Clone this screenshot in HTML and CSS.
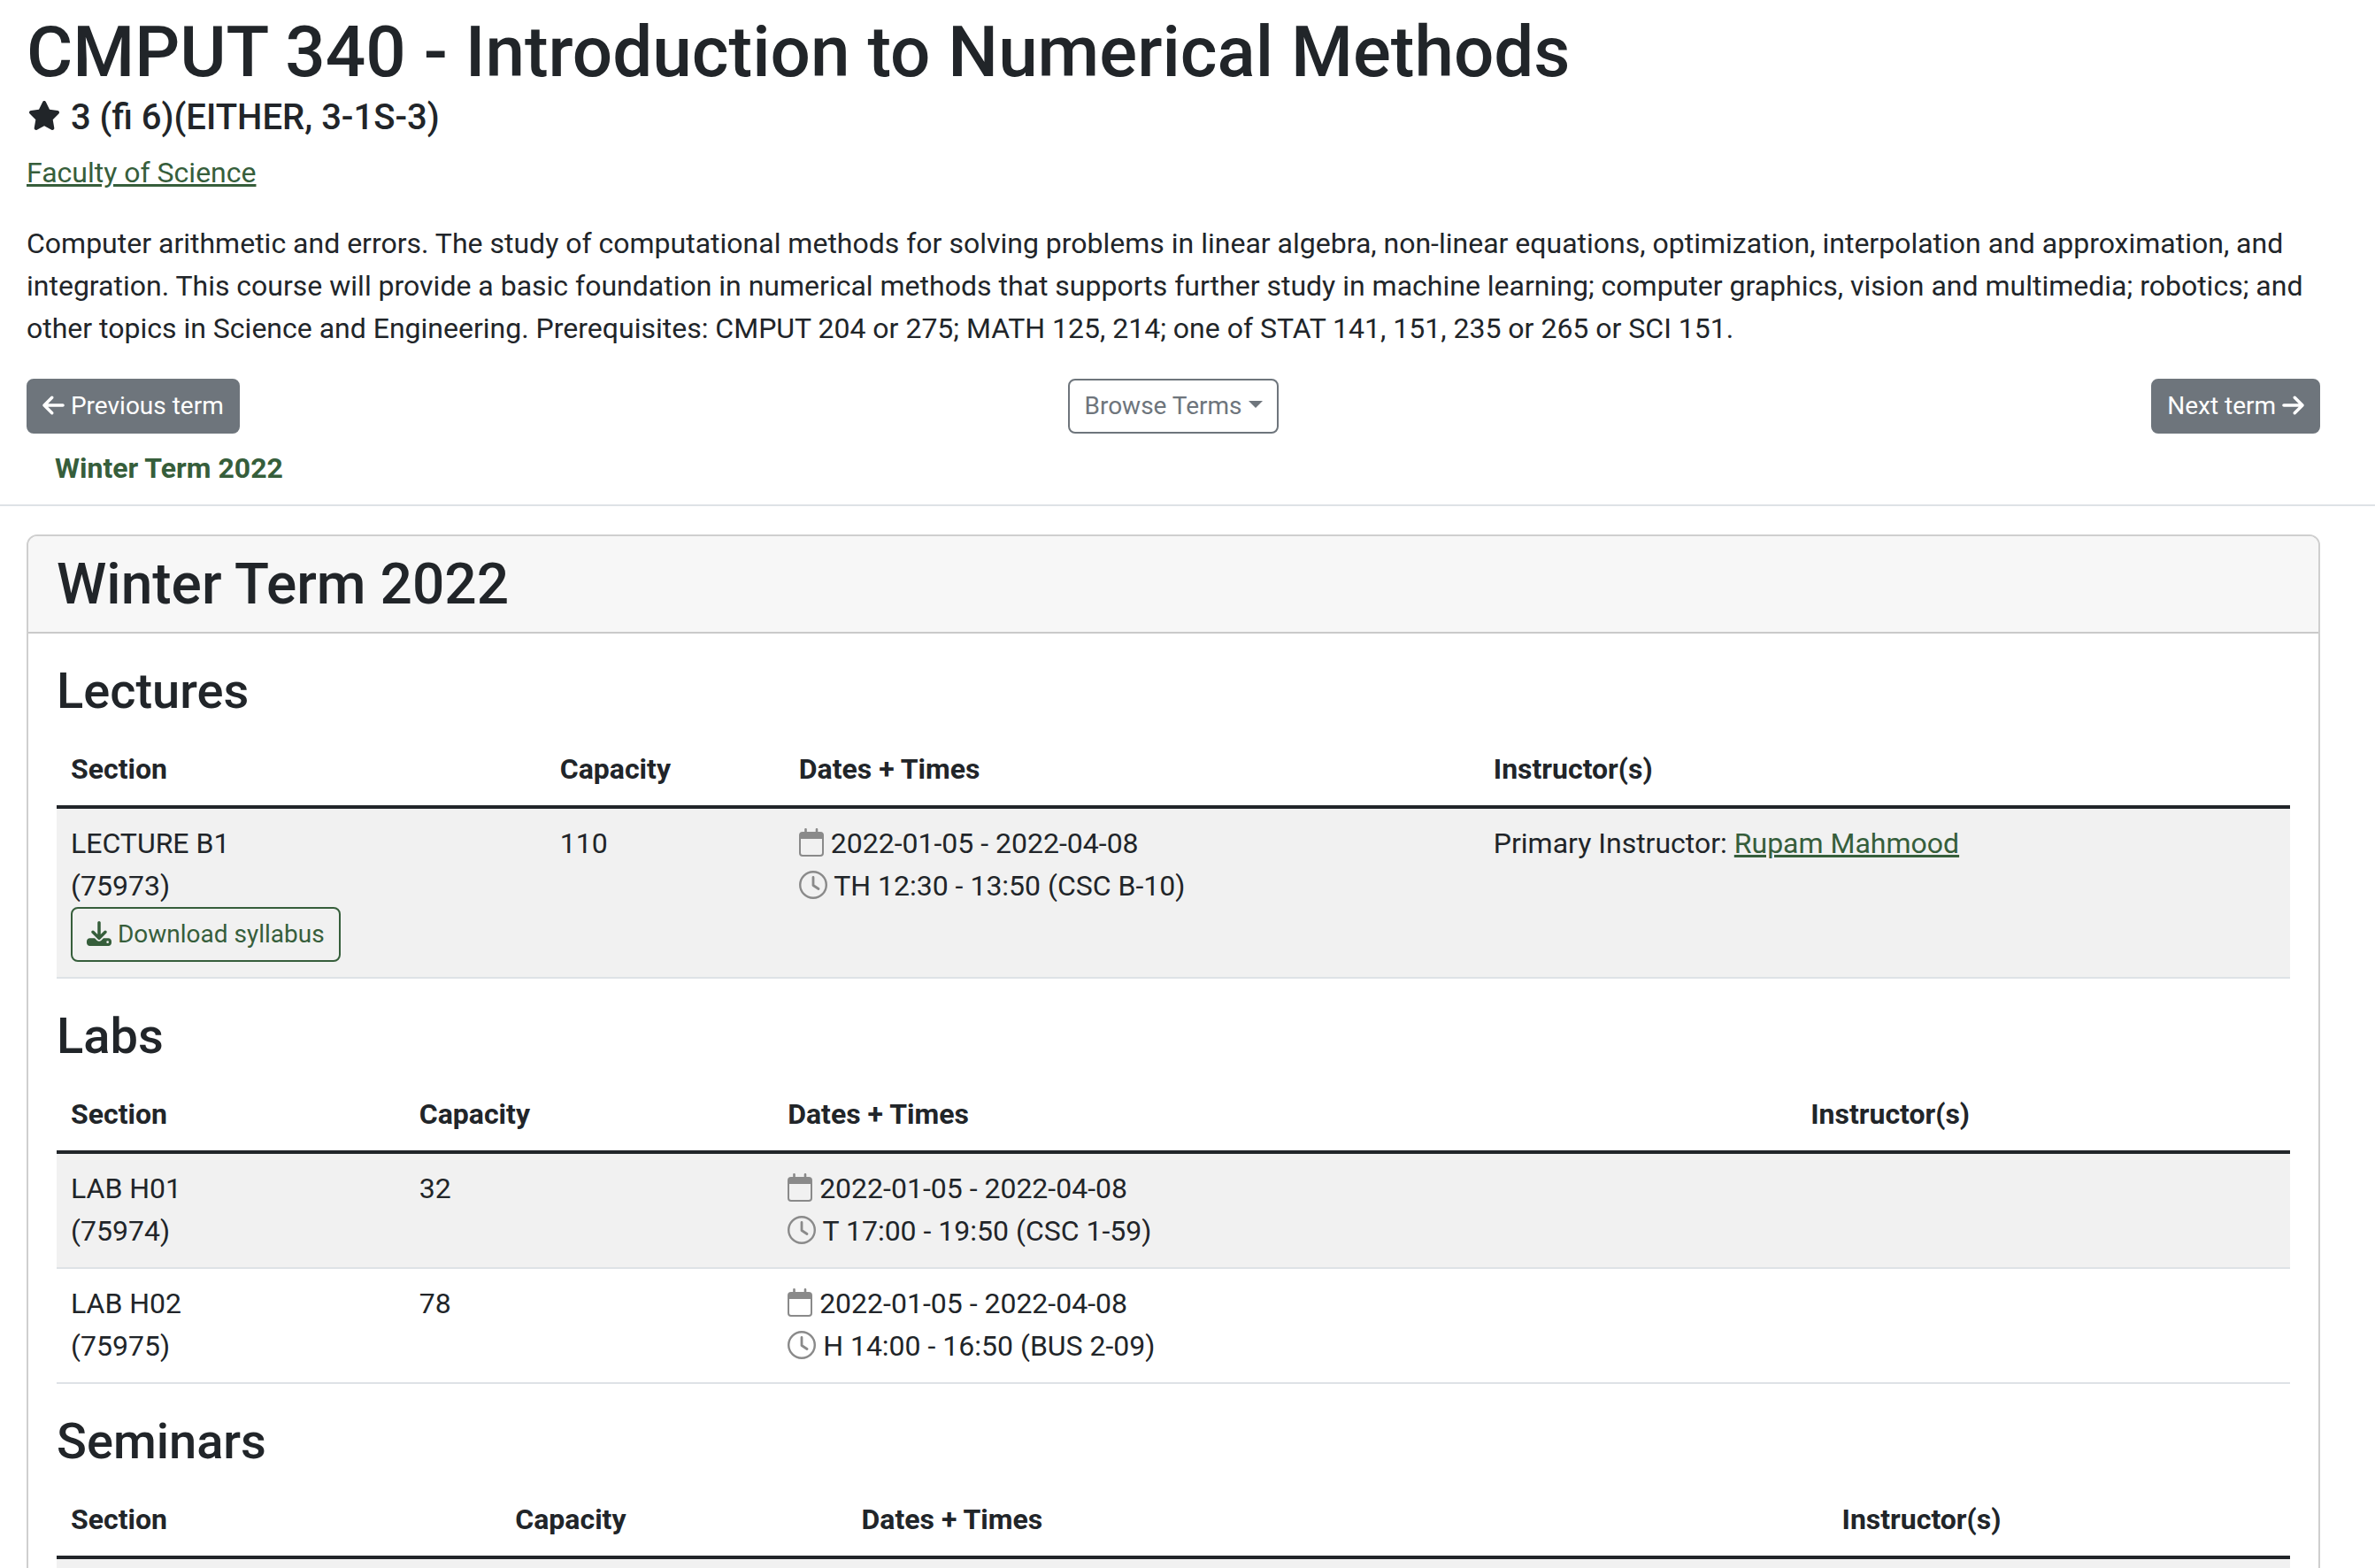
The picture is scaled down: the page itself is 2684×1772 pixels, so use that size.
FILE: index.html
```html
<!DOCTYPE html>
<html lang="en">
<head>
<meta charset="utf-8">
<meta name="viewport" content="width=device-width, initial-scale=1">
<title>CMPUT 340 - Introduction to Numerical Methods</title>
<link rel="stylesheet" href="styles.css">
</head>
<body>
<svg class="sprite" aria-hidden="true">
  <symbol id="calendar" viewBox="0 0 28 32">
    <path d="M7.5 1.2v4M20 1.2v4" fill="none" stroke="currentColor" stroke-width="2.6" stroke-linecap="round"/>
    <path fill="currentColor" fill-rule="evenodd" d="M4 4h20a4 4 0 0 1 4 4v20a4 4 0 0 1-4 4H4a4 4 0 0 1-4-4V8a4 4 0 0 1 4-4zM2 12v16a2 2 0 0 0 2 2h20a2 2 0 0 0 2-2V12z"/>
  </symbol>
  <symbol id="clock" viewBox="0 0 32 32">
    <circle cx="16" cy="16" r="14.8" fill="none" stroke="currentColor" stroke-width="2.4"/>
    <path d="M16 7.5v9l6 4" fill="none" stroke="currentColor" stroke-width="2.8" stroke-linecap="round" stroke-linejoin="round"/>
  </symbol>
</svg>

<header class="course">
  <h1 class="course-title">CMPUT 340 - Introduction to Numerical Methods</h1>
  <p class="units"><svg class="star" viewBox="-22 0 620 512" aria-hidden="true"><path fill="currentColor" d="M316.900 18C311.600 7 300.400 0 288.100 0s-23.400 7-28.800 18L195 150.300 51.400 171.500c-12 1.800-22 10.200-25.700 21.700s-.7 24.200 7.900 32.700L137.800 329 113.200 474.700c-2 12 3 24.200 12.900 31.300s23 8 33.800 2.300l128.300-68.500 128.300 68.500c10.800 5.700 23.900 4.900 33.800-2.300s14.900-19.300 12.900-31.300L438.500 329 542.700 225.900c8.600-8.500 11.700-21.200 7.900-32.700s-13.700-19.900-25.700-21.700L381.200 150.300 316.900 18z"/></svg> 3 (fi 6)(EITHER, 3-1S-3)</p>
  <p class="faculty"><a href="#">Faculty of Science</a></p>
  <p class="description">Computer arithmetic and errors. The study of computational methods for solving problems in linear algebra, non-linear equations, optimization, interpolation and approximation, and integration. This course will provide a basic foundation in numerical methods that supports further study in machine learning; computer graphics, vision and multimedia; robotics; and other topics in Science and Engineering. Prerequisites: CMPUT 204 or 275; MATH 125, 214; one of STAT 141, 151, 235 or 265 or SCI 151.</p>
  <div class="term-nav">
    <a class="btn btn-solid" href="#"><svg class="arrow" viewBox="0 0 448 512" aria-hidden="true"><path fill="currentColor" d="M9.400 233.400c-12.500 12.500-12.500 32.800 0 45.300l160 160c12.500 12.500 32.800 12.500 45.300 0s12.500-32.800 0-45.300L109.200 288 416 288c17.700 0 32-14.300 32-32s-14.300-32-32-32l-306.700 0L214.600 118.600c12.500-12.500 12.500-32.800 0-45.300s-32.800-12.500-45.300 0l-160 160z"/></svg> Previous term</a>
    <button class="btn btn-outline" type="button">Browse Terms<span class="caret"></span></button>
    <a class="btn btn-solid" href="#">Next term <svg class="arrow" viewBox="0 0 448 512" aria-hidden="true"><path fill="currentColor" transform="matrix(-1 0 0 1 448 0)" d="M9.400 233.400c-12.500 12.500-12.500 32.800 0 45.300l160 160c12.500 12.500 32.800 12.500 45.300 0s12.500-32.800 0-45.300L109.200 288 416 288c17.700 0 32-14.300 32-32s-14.300-32-32-32l-306.700 0L214.600 118.600c12.500-12.500 12.500-32.800 0-45.300s-32.800-12.500-45.300 0l-160 160z"/></svg></a>
  </div>
</header>

<nav class="terms"><a href="#winter-2022">Winter Term 2022</a></nav>

<main class="content">
  <section class="card" id="winter-2022">
    <h2 class="card-header">Winter Term 2022</h2>
    <div class="card-body">
      <section>
        <h3 class="kind">Lectures</h3>
        <table class="sections lectures">
          <thead><tr><th>Section</th><th>Capacity</th><th>Dates + Times</th><th>Instructor(s)</th></tr></thead>
          <tbody>
            <tr>
              <td>LECTURE B1<br>(75973)<br><a class="btn btn-green" href="#"><svg class="download" viewBox="0 0 512 512" aria-hidden="true"><path fill="currentColor" d="M288 32c0-17.700-14.300-32-32-32s-32 14.300-32 32V274.700l-73.400-73.400c-12.500-12.500-32.800-12.500-45.300 0s-12.500 32.800 0 45.300l128 128c12.500 12.500 32.800 12.500 45.300 0l128-128c12.500-12.500 12.500-32.800 0-45.300s-32.800-12.500-45.300 0L288 274.700V32zM64 352c-35.300 0-64 28.700-64 64v32c0 35.300 28.700 64 64 64H448c35.300 0 64-28.700 64-64V416c0-35.300-28.700-64-64-64H346.500l-45.300 45.300c-25 25-65.500 25-90.500 0L165.500 352H64zm368 56a24 24 0 1 1 0 48 24 24 0 1 1 0-48z"/></svg> Download syllabus</a></td>
              <td>110</td>
              <td><svg class="cal"><use href="#calendar"/></svg> 2022-01-05 - 2022-04-08<br><svg class="clock"><use href="#clock"/></svg> TH 12:30 - 13:50 (CSC B-10)</td>
              <td>Primary Instructor: <a href="#">Rupam Mahmood</a></td>
            </tr>
          </tbody>
        </table>
      </section>
      <section>
        <h3 class="kind">Labs</h3>
        <table class="sections labs">
          <thead><tr><th>Section</th><th>Capacity</th><th>Dates + Times</th><th>Instructor(s)</th></tr></thead>
          <tbody>
            <tr>
              <td>LAB H01<br>(75974)</td>
              <td>32</td>
              <td><svg class="cal"><use href="#calendar"/></svg> 2022-01-05 - 2022-04-08<br><svg class="clock"><use href="#clock"/></svg> T 17:00 - 19:50 (CSC 1-59)</td>
              <td></td>
            </tr>
            <tr>
              <td>LAB H02<br>(75975)</td>
              <td>78</td>
              <td><svg class="cal"><use href="#calendar"/></svg> 2022-01-05 - 2022-04-08<br><svg class="clock"><use href="#clock"/></svg> H 14:00 - 16:50 (BUS 2-09)</td>
              <td></td>
            </tr>
          </tbody>
        </table>
      </section>
      <section>
        <h3 class="kind">Seminars</h3>
        <table class="sections seminars">
          <thead><tr><th>Section</th><th>Capacity</th><th>Dates + Times</th><th>Instructor(s)</th></tr></thead>
          <tbody>
            <tr><td></td><td></td><td></td><td></td></tr>
          </tbody>
        </table>
      </section>
    </div>
  </section>
</main>
</body>
</html>
```
FILE: styles.css
```css
* {
  box-sizing: border-box;
}

html {
  scrollbar-width: none;
}

body {
  margin: 0;
  padding-top: 11px;
  background: #fff;
  color: #212529;
  font: 400 32px/48px Roboto, "Liberation Sans", sans-serif;
}

h1, h2, h3, p {
  margin: 0;
  font-weight: 500;
}

a {
  color: #365e3b;
}

.sprite {
  display: none;
}

.course {
  padding: 0 62px 0 30px;
}

.course-title {
  font-size: 80px;
  line-height: 96px;
}

.units {
  font-size: 40px;
  line-height: 52px;
}

.star {
  width: 40px;
  height: 33px;
  vertical-align: -1px;
}

.faculty {
  margin-top: 12px;
  font-weight: 400;
}

.description {
  margin: 32px 0 33px;
  font-weight: 400;
}

.term-nav {
  display: grid;
  grid-template-columns: 1fr auto 1fr;
}

.term-nav .btn:first-child {
  justify-self: start;
}

.term-nav .btn:last-child {
  justify-self: end;
}

.btn {
  display: inline-block;
  padding: 8px 16px;
  border: 2px solid transparent;
  border-radius: 8px;
  background: transparent;
  font: 400 28px/42px Roboto, "Liberation Sans", sans-serif;
  text-decoration: none;
  white-space: nowrap;
  vertical-align: middle;
}

.btn-solid {
  border-color: #6e757c;
  background: #6e757c;
  color: #fff;
}

.btn-outline {
  border-color: #6e757c;
  color: #6e757c;
}

.btn-green {
  border-color: #365e3b;
}

.arrow {
  width: 25px;
  height: 28px;
  vertical-align: -4px;
}

.download {
  width: 28px;
  height: 28px;
  vertical-align: -4px;
}

.caret {
  display: inline-block;
  margin-left: 7px;
  border: 8px solid transparent;
  border-top-color: currentColor;
  border-bottom: 0;
  vertical-align: 7px;
}

.terms {
  padding: 15px 62px 17px;
  border-bottom: 2px solid #dee2e6;
  font-weight: 700;
}

.terms a {
  text-decoration: none;
}

.content {
  padding: 32px 62px 32px 30px;
}

.card {
  border: 2px solid #cfcfcf;
  border-radius: 12px;
  overflow: hidden;
}

.card-header {
  padding: 17px 32px 15px;
  border-bottom: 2px solid #cacaca;
  background: #f7f7f7;
  font-size: 64px;
  line-height: 76px;
}

.card-body {
  padding: 0 32px;
}

.kind {
  padding: 32px 0 16px;
  font-size: 56px;
  line-height: 66px;
}

.sections {
  width: 100%;
  border-spacing: 0;
}

.sections th,
.sections td {
  padding: 15px 16px 17px;
  text-align: left;
  vertical-align: top;
}

.sections th {
  border-bottom: 4px solid #212529;
  font-weight: 700;
}

.sections td {
  border-bottom: 2px solid #dee2e6;
}

.sections tbody tr:nth-child(odd) td {
  background: #f1f1f1;
}

.lectures th:nth-child(1) {
  width: 21.9%;
}

.lectures th:nth-child(2) {
  width: 10.7%;
}

.lectures th:nth-child(3) {
  width: 31.1%;
}

.labs th:nth-child(1) {
  width: 15.6%;
}

.labs th:nth-child(2) {
  width: 16.5%;
}

.labs th:nth-child(3) {
  width: 45.8%;
}

.seminars th:nth-child(1) {
  width: 19.9%;
}

.seminars th:nth-child(2) {
  width: 15.5%;
}

.seminars th:nth-child(3) {
  width: 43.9%;
}

.cal,
.clock {
  height: 32px;
  color: #8a8a8a;
  vertical-align: -4px;
}

.cal {
  width: 28px;
}

.clock {
  width: 32px;
}
```
